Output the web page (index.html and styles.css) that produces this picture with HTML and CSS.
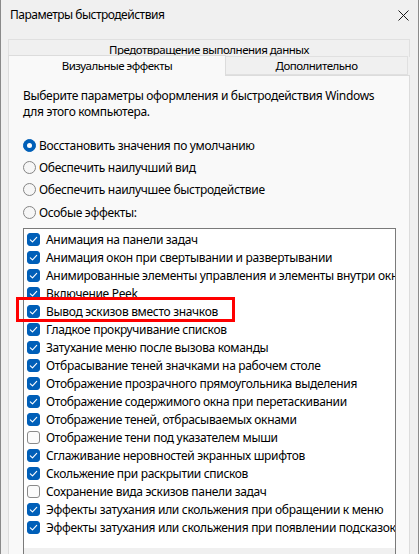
FILE: index.html
```html
<!DOCTYPE html>
<html lang="ru">
<head>
<meta charset="utf-8">
<title>Параметры быстродействия</title>
<link rel="stylesheet" href="styles.css">
</head>
<body>
<div class="window">
  <div class="titlebar">
    <span class="title">Параметры быстродействия</span>
    <svg class="close" width="11" height="11" viewBox="0 0 11 11"><path d="M0.5 0.5 L10.5 10.5 M10.5 0.5 L0.5 10.5" stroke="#1a1a1a" stroke-width="1" fill="none"/></svg>
  </div>
  <div class="body">
    <div class="tabs">
      <div class="tabrow toprow">
        <div class="tab wide">Предотвращение выполнения данных</div>
      </div>
      <div class="tabrow bottomrow">
        <div class="tab selected">Визуальные эффекты</div>
        <div class="tab other">Дополнительно</div>
      </div>
    </div>
    <div class="panel">
      <p class="desc">Выберите параметры оформления и быстродействия Windows для этого компьютера.</p>
      <div class="radios">
        <div class="radio-row"><span class="radio on"></span><span>Восстановить значения по умолчанию</span></div>
        <div class="radio-row"><span class="radio"></span><span>Обеспечить наилучший вид</span></div>
        <div class="radio-row"><span class="radio"></span><span>Обеспечить наилучшее быстродействие</span></div>
        <div class="radio-row"><span class="radio"></span><span>Особые эффекты:</span></div>
      </div>
      <div class="listbox">
        <div class="items">
          <div class="item"><span class="cb on"><svg viewBox="0 0 13 13"><path d="M3.3 6.8 L5.5 8.9 L9.7 4.4"/></svg></span><span class="label">Анимация на панели задач</span></div>
          <div class="item"><span class="cb on"><svg viewBox="0 0 13 13"><path d="M3.3 6.8 L5.5 8.9 L9.7 4.4"/></svg></span><span class="label">Анимация окон при свертывании и развертывании</span></div>
          <div class="item"><span class="cb on"><svg viewBox="0 0 13 13"><path d="M3.3 6.8 L5.5 8.9 L9.7 4.4"/></svg></span><span class="label">Анимированные элементы управления и элементы внутри окна</span></div>
          <div class="item"><span class="cb on"><svg viewBox="0 0 13 13"><path d="M3.3 6.8 L5.5 8.9 L9.7 4.4"/></svg></span><span class="label">Включение Peek</span></div>
          <div class="item"><span class="cb on"><svg viewBox="0 0 13 13"><path d="M3.3 6.8 L5.5 8.9 L9.7 4.4"/></svg></span><span class="label">Вывод эскизов вместо значков</span></div>
          <div class="item"><span class="cb on"><svg viewBox="0 0 13 13"><path d="M3.3 6.8 L5.5 8.9 L9.7 4.4"/></svg></span><span class="label">Гладкое прокручивание списков</span></div>
          <div class="item"><span class="cb on"><svg viewBox="0 0 13 13"><path d="M3.3 6.8 L5.5 8.9 L9.7 4.4"/></svg></span><span class="label">Затухание меню после вызова команды</span></div>
          <div class="item"><span class="cb on"><svg viewBox="0 0 13 13"><path d="M3.3 6.8 L5.5 8.9 L9.7 4.4"/></svg></span><span class="label">Отбрасывание теней значками на рабочем столе</span></div>
          <div class="item"><span class="cb on"><svg viewBox="0 0 13 13"><path d="M3.3 6.8 L5.5 8.9 L9.7 4.4"/></svg></span><span class="label">Отображение прозрачного прямоугольника выделения</span></div>
          <div class="item"><span class="cb on"><svg viewBox="0 0 13 13"><path d="M3.3 6.8 L5.5 8.9 L9.7 4.4"/></svg></span><span class="label">Отображение содержимого окна при перетаскивании</span></div>
          <div class="item"><span class="cb on"><svg viewBox="0 0 13 13"><path d="M3.3 6.8 L5.5 8.9 L9.7 4.4"/></svg></span><span class="label">Отображение теней, отбрасываемых окнами</span></div>
          <div class="item"><span class="cb"></span><span class="label">Отображение тени под указателем мыши</span></div>
          <div class="item"><span class="cb on"><svg viewBox="0 0 13 13"><path d="M3.3 6.8 L5.5 8.9 L9.7 4.4"/></svg></span><span class="label">Сглаживание неровностей экранных шрифтов</span></div>
          <div class="item"><span class="cb on"><svg viewBox="0 0 13 13"><path d="M3.3 6.8 L5.5 8.9 L9.7 4.4"/></svg></span><span class="label">Скольжение при раскрытии списков</span></div>
          <div class="item"><span class="cb"></span><span class="label">Сохранение вида эскизов панели задач</span></div>
          <div class="item"><span class="cb on"><svg viewBox="0 0 13 13"><path d="M3.3 6.8 L5.5 8.9 L9.7 4.4"/></svg></span><span class="label">Эффекты затухания или скольжения при обращении к меню</span></div>
          <div class="item"><span class="cb on"><svg viewBox="0 0 13 13"><path d="M3.3 6.8 L5.5 8.9 L9.7 4.4"/></svg></span><span class="label">Эффекты затухания или скольжения при появлении подсказок</span></div>
        </div>
        <div class="hscroll"></div>
      </div>
    </div>
  </div>
  <div class="highlight"></div>
</div>
</body>
</html>
```

FILE: styles.css
```css
* { box-sizing: border-box; }
html, body {
  margin: 0;
  padding: 0;
  width: 419px;
  height: 554px;
  overflow: hidden;
  background: #f0f0f0;
}
body {
  font-family: "Noto Sans", "Segoe UI", sans-serif;
  font-size: 12px;
  letter-spacing: -0.32px;
  color: #000;
}
.window {
  position: relative;
  width: 419px;
  height: 554px;
  background: #f0f0f0;
  border-left: 1px solid #8a8a8a;
  border-right: 1px solid #8a8a8a;
  display: flex;
  flex-direction: column;
  overflow: hidden;
}
.titlebar {
  height: 31px;
  flex: none;
  display: flex;
  align-items: center;
  justify-content: space-between;
  padding: 0 9px 1px 9px;
}
.title {
  font-size: 12px;
  line-height: 16px;
  letter-spacing: -0.5px;
}
.close {
  display: block;
  margin-top: 1px;
}
.body {
  flex: 1;
  display: flex;
  flex-direction: column;
  padding: 8px 8px 0 7px;
  min-height: 0;
}
.tabs {
  display: flex;
  flex-direction: column;
  position: relative;
  z-index: 2;
  margin-bottom: -1px;
}
.tabrow {
  display: flex;
  align-items: flex-end;
}
.tab {
  border: 1px solid #e0e0e0;
  background: #f0f0f0;
  text-align: center;
  font-size: 11.5px;
  letter-spacing: -0.5px;
  line-height: 16px;
  white-space: nowrap;
}
.wide {
  width: 402px;
  height: 18px;
  padding-top: 2px;
  border-bottom: none;
}
.bottomrow {
  margin-top: -2px;
  height: 21px;
}
.selected {
  width: 218px;
  height: 21px;
  background: #f9f9f9;
  border-color: #dcdcdc;
  border-bottom: none;
  padding-top: 2px;
  position: relative;
  z-index: 3;
}
.other {
  width: 182px;
  height: 19px;
  border-left: none;
  padding-top: 1px;
  margin-bottom: 1px;
}
.panel {
  flex: 1;
  background: #f9f9f9;
  border: 1px solid #dcdcdc;
  border-bottom: none;
  padding: 12px 13px 0 14px;
  min-height: 0;
  display: flex;
  flex-direction: column;
}
.desc {
  margin: 0;
  line-height: 16px;
}
.radios {
  margin-top: 14px;
  display: flex;
  flex-direction: column;
}
.radio-row {
  height: 22.3px;
  display: flex;
  align-items: center;
  gap: 3px;
  white-space: nowrap;
}
.radio {
  width: 13px;
  height: 13px;
  border-radius: 50%;
  border: 1px solid #858585;
  background: #f6f6f6;
  flex: none;
  display: flex;
  align-items: center;
  justify-content: center;
}
.radio.on {
  background: #005fb8;
  border-color: #005fb8;
}
.radio.on::after {
  content: "";
  width: 5px;
  height: 5px;
  border-radius: 50%;
  background: #fff;
}
.listbox {
  margin-top: 5px;
  width: 373px;
  flex: 1;
  background: #fff;
  border: 1px solid #7a7a7a;
  border-bottom: none;
  display: flex;
  flex-direction: column;
  overflow: hidden;
}
.items {
  padding: 1px 0 12px 3px;
  display: flex;
  flex-direction: column;
}
.item {
  height: 18px;
  display: flex;
  align-items: center;
  gap: 6px;
  white-space: nowrap;
}
.cb {
  width: 13px;
  height: 13px;
  flex: none;
  border-radius: 3px;
  border: 1px solid #8a8a8a;
  background: #fbfbfb;
  display: flex;
}
.cb.on {
  background: #005fb8;
  border-color: #005fb8;
}
.cb svg {
  width: 13px;
  height: 13px;
  margin: -1px;
}
.cb svg path {
  fill: none;
  stroke: #fff;
  stroke-width: 1.1;
  stroke-linecap: round;
  stroke-linejoin: round;
}
.hscroll {
  height: 17px;
  background: #f0f0f0;
  flex: none;
}
.highlight {
  position: absolute;
  left: 15px;
  top: 297px;
  width: 219px;
  height: 25px;
  border: 3px solid #f00;
  z-index: 10;
}
```
